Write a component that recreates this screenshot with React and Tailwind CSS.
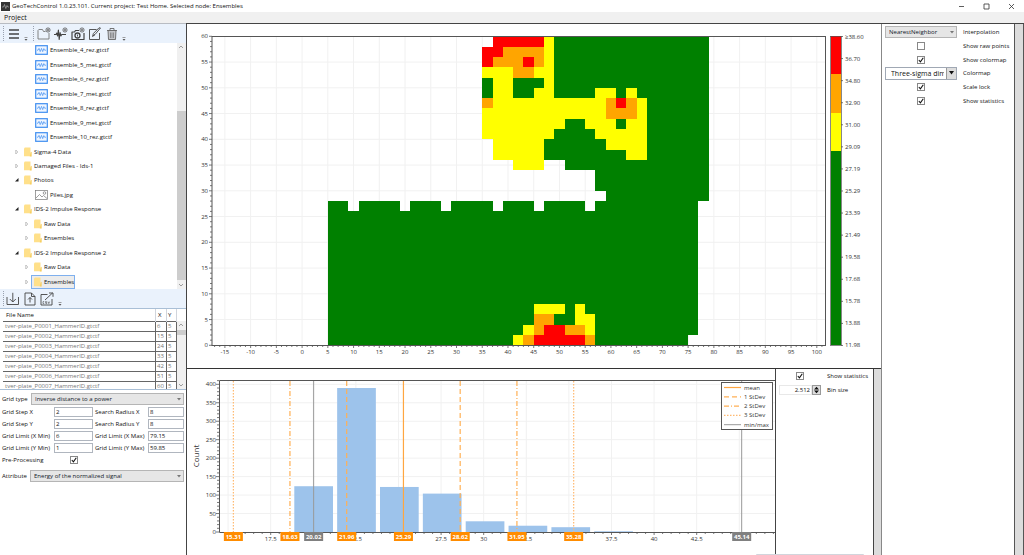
import React from 'react';

const FONT = "font-['Open_Sans','Noto_Sans',sans-serif]";

/* ---------- tree ---------- */

const TREE = [
  { type: 'wave', label: 'Ensemble_4_rez.gtctf' },
  { type: 'wave', label: 'Ensemble_5_met.gtctf' },
  { type: 'wave', label: 'Ensemble_6_rez.gtctf' },
  { type: 'wave', label: 'Ensemble_7_met.gtctf' },
  { type: 'wave', label: 'Ensemble_8_rez.gtctf' },
  { type: 'wave', label: 'Ensemble_9_met.gtctf' },
  { type: 'wave', label: 'Ensemble_10_rez.gtctf' },
  { type: 'folder', level: 0, label: 'Sigma-4 Data' },
  { type: 'folder', level: 0, label: 'Damaged Files - Ids-1' },
  { type: 'folder', level: 0, label: 'Photos', open: true },
  { type: 'photo', label: 'Piles.jpg' },
  { type: 'folder', level: 0, label: 'IDS-2 Impulse Response', open: true },
  { type: 'folder', level: 1, label: 'Raw Data' },
  { type: 'folder', level: 1, label: 'Ensembles' },
  { type: 'folder', level: 0, label: 'IDS-2 Impulse Response 2', open: true },
  { type: 'folder', level: 1, label: 'Raw Data' },
  { type: 'folder', level: 1, label: 'Ensembles', selected: true },
];

const FILES = [
  ['tver-plate_P0001_HammerID.gtctf', 6, 5],
  ['tver-plate_P0002_HammerID.gtctf', 15, 5],
  ['tver-plate_P0003_HammerID.gtctf', 24, 5],
  ['tver-plate_P0004_HammerID.gtctf', 33, 5],
  ['tver-plate_P0005_HammerID.gtctf', 42, 5],
  ['tver-plate_P0006_HammerID.gtctf', 51, 5],
  ['tver-plate_P0007_HammerID.gtctf', 60, 5],
];

const GRID_FIELDS = [
  ['Grid Step X', '2', 'Search Radius X', '8'],
  ['Grid Step Y', '2', 'Search Radius Y', '8'],
  ['Grid Limit (X Min)', '6', 'Grid Limit (X Max)', '79.15'],
  ['Grid Limit (Y Min)', '1', 'Grid Limit (Y Max)', '59.85'],
];

/* ---------- icons ---------- */

const WaveIcon = () => (
  <svg viewBox="0 0 13 10" className="w-[13px] h-[10px] shrink-0" fill="none">
    <rect x="0.7" y="0.7" width="11.6" height="8.6" fill="#eef5ff" stroke="#3f8ef0" strokeWidth="1.2" />
    <path d="M2 5.2h1l1-1.8 1.2 3.2 1.3-3.2 1.2 3.2 1.1-3 .8 1.6h1.4" stroke="#3f8ef0" strokeWidth="0.7" />
  </svg>
);

const PhotoIcon = () => (
  <svg viewBox="0 0 13 10" className="w-[13px] h-[10px] shrink-0" fill="none" stroke="#777" strokeWidth="0.7">
    <rect x="0.5" y="0.5" width="12" height="9" />
    <path d="M1 8l3.5-3.5L7 7l1.5-1.5L12 8.500" />
    <circle cx="9.500" cy="3" r="1.300" />
  </svg>
);

const FolderIcon = () => (
  <svg viewBox="0 0 8 10" className="w-[8px] h-[10px] shrink-0">
    <path d="M0 1.500L0.800 0.500H6.500V9.300H0z" fill="#ffe08a" />
    <path d="M6.500 5.500l1.200-.8v4.800H5.800z" fill="#f7cf60" />
  </svg>
);

const ExpandIcon = ({ open }) => (
  <svg viewBox="0 0 6 6" className="w-[6px] h-[6px] shrink-0">
    {open ? (
      <path d="M4.500 1v3.500H1z" fill="#222" />
    ) : (
      <path d="M1.800 1l2 2-2 2z" fill="none" stroke="#aaa" strokeWidth="0.7" />
    )}
  </svg>
);

const ToolIcon = ({ children }) => (
  <svg viewBox="0 0 14 14" className="w-[14px] h-[14px]" fill="none" stroke="#444" strokeWidth="0.9" strokeLinejoin="round">
    {children}
  </svg>
);

const Plus = () => (
  <>
    <circle cx="11" cy="3" r="2.100" fill="#eef4fc" strokeWidth="0.7" />
    <path d="M9.800 3h2.400M11 1.800v2.400" strokeWidth="0.7" />
  </>
);

const MenuIcon = () => (
  <ToolIcon>
    <path d="M2 3h10M2 7h10M2 11h10" strokeWidth="1.500" />
  </ToolIcon>
);

const NewFolderIcon = () => (
  <ToolIcon>
    <path d="M8.500 4.500H6.500L5.500 2.500H1.800L1 3.500V12h11V6" stroke="#777" />
    <Plus />
  </ToolIcon>
);

const AddSignalIcon = () => (
  <ToolIcon>
    <path d="M0 7.500h2l.8-1.500.8 3 .8-6 .8 9.500.9-7 .8 3.500.8-1.500H12" strokeWidth="1.100" />
    <Plus />
  </ToolIcon>
);

const AddPhotoIcon = () => (
  <ToolIcon>
    <path d="M8 3.500H4.500L3.500 5H1v7.500h12V6" strokeWidth="1.200" />
    <circle cx="6.500" cy="8.500" r="2.500" strokeWidth="1.300" />
    <path d="M6.500 7.500v2" />
    <Plus />
  </ToolIcon>
);

const EditIcon = () => (
  <ToolIcon>
    <path d="M8.500 2.500H1.500v10h10V6" />
    <path d="M12.500 1L7 7.500l-2.500 2 .9-3L11 .8z" />
    <path d="M5 9l2-1.500" />
  </ToolIcon>
);

const TrashIcon = () => (
  <ToolIcon>
    <g stroke="#666">
      <path d="M2 3.500h10M5 3.300V1.500h4v1.800" />
      <path d="M3 3.500l.5 9h7l.5-9z" fill="#c4c6ca" />
      <path d="M5.500 5.500v5.500M7 5.500v5.500M8.500 5.500v5.500" strokeWidth="0.6" />
    </g>
  </ToolIcon>
);

const ImportIcon = () => (
  <ToolIcon>
    <path d="M1 5v7.500h11.500V5M6.800.8v9M3.800 7l3 3 3-3" />
  </ToolIcon>
);

const UploadFileIcon = () => (
  <ToolIcon>
    <path d="M2 1h6.500l3.500 3.500V13H2zM8.500 1v3.500H12" />
    <path d="M7 10.500V5.500M5 7.500l2-2 2 2" />
  </ToolIcon>
);

const ExportCsvIcon = () => (
  <ToolIcon>
    <path d="M7.500 2.500H1v10.500h11V7" />
    <path d="M5 8l7.500-7M9 1h4v3.800" />
    <path d="M4.200 9.600H3v2h1.200M6.800 9.600H5.500v1h1.300v1H5.500M8 9.600l.8 2 .8-2" strokeWidth="0.6" />
  </ToolIcon>
);

const Chevron = ({ down }) => (
  <svg viewBox="0 0 8 8" className="w-[8px] h-[8px]" fill="none" stroke="#888" strokeWidth="0.8">
    <path d={down ? 'M2 3l2 2 2-2' : 'M2 5l2-2 2 2'} />
  </svg>
);

/* ---------- small controls ---------- */

const ToolButton = ({ label, children }) => (
  <button type="button" aria-label={label} className="flex items-center justify-center w-[17px] h-[17px]">
    {children}
  </button>
);

const Grip = () => <div className="w-px h-[15px] border-l border-dotted border-gray-400" />;

const Overflow = () => (
  <svg viewBox="0 0 4 4" className="w-[4px] h-[4px] self-end mb-[2px]">
    <path d="M0.500 0.500h3" stroke="#777" strokeWidth="0.7" />
    <path d="M0.500 2h3l-1.500 1.800z" fill="#555" />
  </svg>
);

const Select = ({ id, value, className = '' }) => (
  <div className={`relative flex ${className}`}>
    <select
      id={id}
      defaultValue={value}
      className="appearance-none w-full h-[12px] pl-[3px] pr-[10px] bg-[#e6e6e6] border border-[#b5b5b5] text-[6px] leading-[10px] text-gray-900"
    >
      <option>{value}</option>
    </select>
    <svg viewBox="0 0 4 3" className="absolute right-[3px] top-[5px] w-[4px] h-[3px] pointer-events-none">
      <path d="M0 0h4L2 2.500z" fill="#777" />
    </svg>
  </div>
);

const Check = ({ id, checked }) => (
  <span className="relative flex w-[8px] h-[8px]">
    <input
      id={id}
      type="checkbox"
      defaultChecked={checked}
      className="peer appearance-none w-[8px] h-[8px] bg-white border border-[#888]"
    />
    <svg viewBox="0 0 8 8" className="absolute inset-0 w-[8px] h-[8px] pointer-events-none opacity-0 peer-checked:opacity-100">
      <path d="M1.800 4l1.600 1.800L6.300 1.800" fill="none" stroke="#111" strokeWidth="1.100" />
    </svg>
  </span>
);

const ScrollBar = ({ thumb, spacer }) => (
  <div className="flex flex-col w-[9px] shrink-0 bg-[#f0f0f0]">
    <Chevron />
    <div className={spacer} />
    <div className={`bg-[#cdcdcd] ${thumb}`} />
    <div className="mt-auto">
      <Chevron down />
    </div>
  </div>
);

/* ---------- left side ---------- */

const TreeRow = ({ item }) => {
  if (item.type !== 'folder') {
    return (
      <li className="flex flex-1 items-center gap-[2px] pl-[35px]">
        {item.type === 'wave' ? <WaveIcon /> : <PhotoIcon />}
        <span>{item.label}</span>
      </li>
    );
  }
  return (
    <li className={`flex flex-1 items-center gap-[1px] ${item.level ? 'pl-[24px]' : 'pl-[14px]'}`}>
      <ExpandIcon open={item.open} />
      <span
        className={`flex items-center self-stretch gap-[2px] pl-[2px] border ${
          item.selected ? 'bg-[#ececec] border-[#7fb0ee]' : 'border-transparent'
        }`}
      >
        <FolderIcon />
        <span>{item.label}</span>
      </span>
    </li>
  );
};

const Sidebar = () => (
  <aside className="flex flex-col w-[186px] shrink-0">
    <div className="flex items-center h-[20px] pl-[3px] bg-[#eaf2fc] border-t border-[#b8bcc2]">
      <Grip />
      <div className="w-px" />
      <ToolButton label="Menu"><MenuIcon /></ToolButton>
      <div className="w-[2px]" />
      <Overflow />
      <div className="w-[5px]" />
      <Grip />
      <div className="w-px" />
      <div className="flex">
        <ToolButton label="New folder"><NewFolderIcon /></ToolButton>
        <ToolButton label="Add signal"><AddSignalIcon /></ToolButton>
        <ToolButton label="Add photo"><AddPhotoIcon /></ToolButton>
        <ToolButton label="Edit"><EditIcon /></ToolButton>
        <ToolButton label="Delete"><TrashIcon /></ToolButton>
      </div>
      <div className="w-[2px]" />
      <Overflow />
    </div>

    <div className="flex h-[246px]">
      <ul className="flex flex-col flex-1">
        {TREE.map((item, index) => (
          <TreeRow key={index} item={item} />
        ))}
      </ul>
      <ScrollBar spacer="h-[60px]" thumb="h-[169px]" />
    </div>

    <div className="flex items-center h-[20px] pl-[3px] bg-[#eaf2fc] border-b border-[#a9bfd6]">
      <Grip />
      <ToolButton label="Import"><ImportIcon /></ToolButton>
      <ToolButton label="Load file"><UploadFileIcon /></ToolButton>
      <ToolButton label="Export CSV"><ExportCsvIcon /></ToolButton>
      <div className="w-[3px]" />
      <Overflow />
    </div>

    <div className="flex h-[81px] overflow-hidden border-b border-[#a9bfd6]">
      <div className="flex-1 pl-[3px] overflow-hidden">
        <table className="w-full table-fixed border-collapse">
          <thead>
            <tr className="h-[12px] text-left">
              <th className="pl-[3px] font-normal">File Name</th>
              <th className="w-[11px] pl-[2px] font-normal border-l border-gray-300">X</th>
              <th className="w-[10px] pl-px font-normal border-x border-gray-300">Y</th>
            </tr>
          </thead>
          <tbody className="text-[#777]">
            {FILES.map(([name, x, y]) => (
              <tr key={name} className="h-[10px] leading-[8px]">
                <td className="pl-[2px] border-y border-[#666]">{name}</td>
                <td className="pl-px border border-[#666]">{x}</td>
                <td className="pl-px border border-[#666]">{y}</td>
              </tr>
            ))}
          </tbody>
        </table>
      </div>
      <div className="flex pt-[12px]">
        <ScrollBar spacer="h-px" thumb="h-[5px]" />
      </div>
    </div>

    <form className="flex flex-col pl-[2px] pr-[2px] pt-[3px]">
      <div className="flex items-center">
        <label htmlFor="grid-type" className="w-[29px]">Grid type</label>
        <Select id="grid-type" value="Inverse distance to a power" className="flex-1" />
      </div>
      <div className="grid grid-cols-[52px_39px_1fr_36px] items-center gap-y-[2px] mt-[2px]">
        {GRID_FIELDS.flatMap(([a, av, b, bv]) => [
          <label key={a} htmlFor={a} className="whitespace-nowrap">{a}</label>,
          <input key={a + 'i'} id={a} defaultValue={av} className="w-full h-[10px] pl-px border border-[#b0b6bf] text-[6px] leading-[8px]" />,
          <label key={b} htmlFor={b} className="pl-[2px] whitespace-nowrap">{b}</label>,
          <input key={b + 'i'} id={b} defaultValue={bv} className="w-full h-[10px] pl-px border border-[#b0b6bf] text-[6px] leading-[8px]" />,
        ])}
      </div>
      <div className="flex items-center h-[14px]">
        <label htmlFor="pre" className="w-[68px]">Pre-Processing</label>
        <Check id="pre" checked />
      </div>
      <div className="flex items-center mt-[3px]">
        <label htmlFor="attribute" className="w-[28px]">Attribute</label>
        <Select id="attribute" value="Energy of the normalized signal" className="flex-1" />
      </div>
    </form>
  </aside>
);

/* ---------- heat map ---------- */

const COLORS = { R: '#ff0000', O: '#ffa500', Y: '#ffff00', G: '#008000' };

// run lengths from the top row down, one cell is 2 x 2 units and starts at x = 5
const CELLS = [
  '16. 5R 1Y 15G',
  '15. 2R 4O 1Y 15G',
  '15. 1R 3O 1R 1O 1Y 15G',
  '15. 3Y 2O 2Y 15G',
  '15. 1G 2Y 3G 1Y 15G',
  '15. 1G 2Y 2G 2Y 4G 2Y 1G 1Y 7G',
  '15. 1O 11Y 1O 1R 1O 1Y 6G',
  '15. 12Y 3O 1Y 6G',
  '15. 8Y 2G 3Y 1G 2Y 6G',
  '15. 7Y 4G 5Y 6G',
  '16. 5Y 6G 4Y 6G',
  '16. 5Y 8G 2Y 6G',
  '18. 3Y 2. 14G',
  '26. 11G',
  '26. 11G',
  '27. 10G',
  '2G 1. 4G 1. 3G 1. 4G 1. 3G 1. 4G 1. 10G',
  '36G', '36G', '36G', '36G', '36G', '36G', '36G', '36G', '36G',
  '20G 3Y 1G 1Y 11G',
  '20G 2O 2G 2Y 10G',
  '19G 1Y 1O 2R 2O 1Y 10G',
  '18G 1Y 1O 5R 1O 9G',
];

const range = (from, to, step = 1) => {
  const out = [];
  for (let v = from; v <= to; v += step) out.push(v);
  return out;
};

const mapX = (v) => 115.1 + 5.147 * v;
const mapY = (v) => 321.3 - 5.15 * v;

const SCALE = [
  '≥38.60', '36.70', '34.80', '32.90', '31.00', '29.09', '27.19', '25.29',
  '23.39', '21.49', '19.58', '17.68', '15.78', '13.88', '11.98',
];

const HeatMap = () => {
  const rects = [];
  CELLS.forEach((line, row) => {
    let col = 0;
    line.split(' ').forEach((run) => {
      const count = parseInt(run, 10);
      const kind = run.slice(-1);
      if (kind !== '.') {
        const x1 = Math.round(mapX(5 + col * 2));
        const x2 = Math.round(mapX(5 + (col + count) * 2));
        const y1 = Math.round(mapY(60 - row * 2));
        const y2 = Math.round(mapY(58 - row * 2));
        rects.push(<rect key={`${row}-${col}`} x={x1} y={y1} width={x2 - x1} height={y2 - y1} fill={COLORS[kind]} />);
      }
      col += count;
    });
  });

  return (
    <svg viewBox="0 0 694 344" className="block w-full" fontSize="6" fill="#333">
      <g stroke="#f1f1f1">
        {range(-15, 100, 5).map((v) => (
          <path key={v} d={`M${mapX(v)} 12V321`} />
        ))}
        {range(5, 55, 5).map((v) => (
          <path key={v} d={`M25 ${mapY(v)}H638`} />
        ))}
      </g>
      <g shapeRendering="crispEdges">{rects}</g>
      <rect x="25" y="12.500" width="613.500" height="309" fill="none" stroke="#555" />
      <g stroke="#555" strokeWidth="0.8">
        {range(-17, 101).map((v) => (
          <path key={v} d={`M${mapX(v)} 321v${v % 5 ? 2 : 3}`} />
        ))}
        {range(0, 60).map((v) => (
          <path key={v} d={`M25 ${mapY(v)}h${v % 5 ? -2 : -3}`} />
        ))}
      </g>
      <g textAnchor="middle">
        {range(-15, 100, 5).map((v) => (
          <text key={v} x={mapX(v)} y="330">{v}</text>
        ))}
      </g>
      <g textAnchor="end">
        {range(0, 60, 5).map((v) => (
          <text key={v} x="21" y={mapY(v) + 2}>{v}</text>
        ))}
      </g>

      {/* colour bar */}
      <rect x="644" y="12" width="10" height="38" fill={COLORS.R} />
      <rect x="644" y="50" width="10" height="39" fill={COLORS.O} />
      <rect x="644" y="89" width="10" height="38" fill={COLORS.Y} />
      <rect x="644" y="127" width="10" height="194" fill={COLORS.G} />
      <rect x="643.500" y="12.500" width="11" height="309" fill="none" stroke="#555" strokeWidth="0.7" />
      {SCALE.map((label, i) => (
        <g key={label}>
          <path d={`M654 ${12.5 + i * 22.07}h2`} stroke="#555" strokeWidth="0.8" />
          <text x="658" y={14.5 + i * 22.07}>{label}</text>
        </g>
      ))}
    </svg>
  );
};

/* ---------- histogram ---------- */

const BINS = [124, 390, 122, 104, 29, 17, 13, 2];

// the other multiples of 2.5 fall behind a statistics badge
const HIST_TICKS = [17.5, 22.5, 27.5, 30, 32.5, 37.5, 40, 42.5];

const MARKS = [
  { v: 20.02, kind: 'minmax', label: '20.02' },
  { v: 45.14, kind: 'minmax', label: '45.14' },
  { v: 15.31, kind: 'sd3', label: '15.31' },
  { v: 18.63, kind: 'sd2', label: '18.63' },
  { v: 21.96, kind: 'sd1', label: '21.96' },
  { v: 25.29, kind: 'mean', label: '25.29' },
  { v: 28.62, kind: 'sd1', label: '28.62' },
  { v: 31.95, kind: 'sd2', label: '31.95' },
  { v: 35.28, kind: 'sd3', label: '35.28' },
];

const STYLES = {
  mean: { stroke: '#ffa640', strokeWidth: 1.2 },
  sd1: { stroke: '#ffb055', strokeWidth: 1.2, strokeDasharray: '5 3' },
  sd2: { stroke: '#ffb055', strokeWidth: 1.2, strokeDasharray: '5 2 1 2' },
  sd3: { stroke: '#ffb970', strokeWidth: 1.2, strokeDasharray: '1.5 1.5' },
  minmax: { stroke: '#999' },
};

const LEGEND = [
  ['mean', 'mean'],
  ['sd1', '1 StDev'],
  ['sd2', '2 StDev'],
  ['sd3', '3 StDev'],
  ['minmax', 'min/max'],
];

const histX = (v) => 83.7 + 17.04 * (v - 17.5);
const histY = (v) => 163 - 0.3692 * v;

const Histogram = () => (
  <svg viewBox="0 0 588 186" className="block w-full" fontSize="6" fill="#333">
    <g stroke="#f1f1f1">
      {range(15, 45, 2.5).map((v) => (
        <path key={v} d={`M${histX(v)} 12V163`} />
      ))}
      {range(50, 400, 50).map((v) => (
        <path key={v} d={`M33 ${histY(v)}H588`} />
      ))}
    </g>
    {BINS.map((n, i) => (
      <rect key={i} x={107.3 + i * 42.85} y={histY(n)} width="38.700" height={163 - histY(n)} fill="#9dc3eb" />
    ))}
    <path d="M588 11.500H32.500V163.500H588" fill="none" stroke="#555" />
    <g stroke="#555" strokeWidth="0.8">
      {range(15, 47, 0.5).map((v) => (
        <path key={v} d={`M${histX(v)} 163v${v % 2.5 ? 2 : 3}`} />
      ))}
      {range(0, 410, 10).map((v) => (
        <path key={v} d={`M32 ${histY(v)}h${v % 50 ? -2 : -3}`} />
      ))}
    </g>
    <g textAnchor="middle">
      {HIST_TICKS.map((v) => (
        <text key={v} x={histX(v)} y="172">{v}</text>
      ))}
    </g>
    <g textAnchor="end">
      {range(0, 400, 50).map((v) => (
        <text key={v} x="29" y={histY(v) + 2}>{v}</text>
      ))}
    </g>
    <text x="12" y="87" fontSize="8" textAnchor="middle" transform="rotate(-90 12 87)">Count</text>

    {MARKS.map((m) => (
      <g key={m.label}>
        <path d={`M${histX(m.v)} 12V163`} {...STYLES[m.kind]} />
        <rect x={histX(m.v) - 9.5} y="163" width="19" height="9" fill={m.kind === 'minmax' ? '#808080' : '#ff8c00'} />
        <text x={histX(m.v)} y="170" textAnchor="middle" fill="#fff" fontWeight="bold">{m.label}</text>
      </g>
    ))}

    <rect x="534.500" y="13.500" width="51" height="47" fill="#fff" stroke="#555" />
    {LEGEND.map(([kind, label], i) => (
      <g key={kind}>
        <path d={`M537 ${18.5 + i * 9.3}h17`} {...STYLES[kind]} />
        <text x="557" y={20.5 + i * 9.3}>{label}</text>
      </g>
    ))}
  </svg>
);

/* ---------- settings ---------- */

const MapSettings = () => (
  <section className="w-[132px] shrink-0 pt-px">
    <div className="grid grid-cols-[72px_1fr] grid-rows-6 h-[83px] items-center gap-x-[6px] pl-[3px]">
      <Select id="interp" value="NearestNeighbor" />
      <label htmlFor="interp">Interpolation</label>
      <div className="flex justify-center"><Check id="raw" /></div>
      <label htmlFor="raw">Show raw points</label>
      <div className="flex justify-center"><Check id="cmap" checked /></div>
      <label htmlFor="cmap">Show colormap</label>
      <div className="flex h-[13px] border border-[#a0a8b4]">
        <input
          id="colormap"
          defaultValue="Three-sigma dimension"
          className="flex-1 min-w-0 ml-[5px] mr-[2px] text-[7px] leading-[11px]"
        />
        <button type="button" aria-label="Open colormap list" className="flex items-center justify-center w-[10px] bg-[#ddd] border-l border-[#999]">
          <svg viewBox="0 0 5 4" className="w-[5px] h-[4px]"><path d="M0 0h5L2.500 3.500z" fill="#111" /></svg>
        </button>
      </div>
      <label htmlFor="colormap">Colormap</label>
      <div className="flex justify-center"><Check id="lock" checked /></div>
      <label htmlFor="lock">Scale lock</label>
      <div className="flex justify-center"><Check id="stats" checked /></div>
      <label htmlFor="stats">Show statistics</label>
    </div>
  </section>
);

const HistSettings = () => (
  <section className="w-[98px] shrink-0 border-l border-[#444]">
    <div className="grid grid-cols-[42px_1fr] auto-rows-[14px] items-center gap-x-[6px] pl-[3px]">
      <div className="flex justify-center"><Check id="hist-stats" checked /></div>
      <label htmlFor="hist-stats">Show statistics</label>
      <div className="flex h-[10px]">
        <input
          id="bin"
          defaultValue="2.512"
          className="flex-1 min-w-0 pr-px text-right border border-[#e8e8e8] text-[6px] leading-[8px]"
        />
        <button type="button" aria-label="Change bin size" className="flex items-center justify-center w-[9px] bg-[#ddd] border border-[#999]">
          <svg viewBox="0 0 7 8" className="w-[7px] h-[8px]"><path d="M1 3.500L3.500.8 6 3.500zM1 4.500h5L3.500 7.200z" fill="#111" /></svg>
        </button>
      </div>
      <label htmlFor="bin">Bin size</label>
    </div>
  </section>
);

/* ---------- window ---------- */

const TitleBar = () => (
  <header className="flex items-center h-[12px] pl-[1px] bg-white">
    <svg viewBox="0 0 9 9" className="w-[9px] h-[9px]">
      <rect width="9" height="9" fill="#333" />
      <path d="M1 5h1.500l1-2.500 1.300 4L6 3.500 6.800 5H8" fill="none" stroke="#bbb" strokeWidth="0.6" />
    </svg>
    <h1 className="pl-[2px]">GeoTechControl 1.0.23.101. Current project: Test Home. Selected node: Ensembles</h1>
    <div className="flex ml-auto">
      {[
        ['Minimize', 'M1 3.500h5'],
        ['Maximize', 'M1 1h5v5H1z'],
        ['Close', 'M1 1l5 5M6 1L1 6'],
      ].map(([label, d]) => (
        <button key={label} type="button" aria-label={label} className="flex items-center justify-center w-[25px] h-[12px]">
          <svg viewBox="0 0 7 7" className="w-[7px] h-[7px]" fill="none" stroke="#333" strokeWidth="0.8">
            <path d={d} />
          </svg>
        </button>
      ))}
    </div>
  </header>
);

const App = () => (
  <div className={`relative flex flex-col min-h-screen overflow-hidden bg-white text-[6px] leading-[8px] text-[#111] ${FONT}`}>
    <TitleBar />
    <nav className="flex items-center h-[11px] pl-[4px] bg-[#f0f0f0]">
      <button type="button" className="text-[7px]">Project</button>
    </nav>

    <div className="flex flex-1">
      <Sidebar />
      <main className="flex flex-1 min-w-0 border-l border-t border-[#444]">
        <div className="flex flex-col flex-1 min-w-0">
          <HeatMap />
          <div className="flex flex-1 border-t border-[#333]">
            <div className="flex-1 min-w-0">
              <Histogram />
            </div>
            <HistSettings />
            <div className="w-[8px] shrink-0 bg-[#dcdcdc] border-l border-[#444]" />
          </div>
        </div>
        <div className="w-px bg-[#888]" />
        <MapSettings />
        <div className="w-[10px] shrink-0 bg-[#dcdcdc] border-x border-[#555]" />
      </main>
    </div>
    <div className="absolute bottom-0 right-[160px] w-[108px] h-px rounded-t bg-gray-300" />
  </div>
);

export default App;
